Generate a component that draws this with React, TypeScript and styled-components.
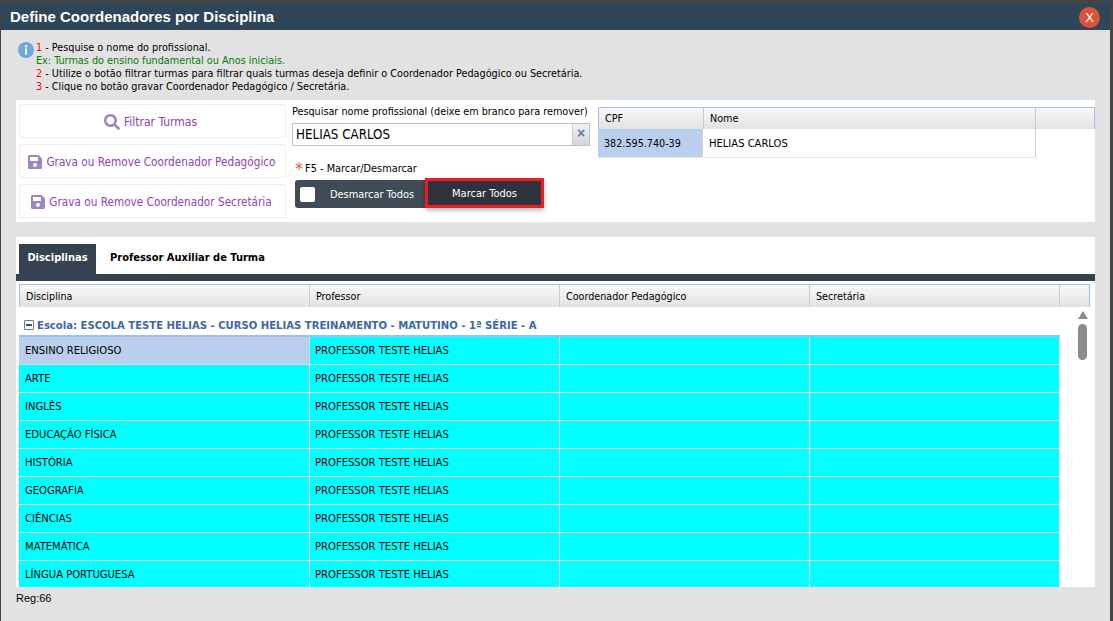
import React from "react";
import styled, { createGlobalStyle } from "styled-components";
import { FaSearch, FaSave } from "react-icons/fa";

const FONT = `"DejaVu Sans Condensed", "DejaVu Sans", sans-serif`;

const Global = createGlobalStyle`
  html, body { margin: 0; padding: 0; background: #444; }
  body { font-family: ${FONT}; font-size: 10.7px; color: #000; overflow: hidden; }
  * { box-sizing: border-box; }
`;

const Page = styled.div`
  width: 1113px;
  height: 621px;
  padding: 3px 3px 0 1px;
  background: #454545;
`;
const Dialog = styled.div`
  height: 618px;
  background: #e2e2e2;
  display: flex;
  flex-direction: column;
`;
const TitleBar = styled.header`
  height: 27px;
  flex: none;
  background: #2f4558;
  display: flex;
  align-items: center;
  justify-content: space-between;
  padding: 0 10px 0 9px;
`;
const Title = styled.h1`
  margin: 0;
  font: bold 15px "Liberation Sans", Arial, sans-serif;
  color: #fff;
`;
const CloseButton = styled.button`
  width: 21px;
  height: 21px;
  border: 0;
  padding: 0;
  border-radius: 50%;
  background: #d9533c;
  color: #fff;
  font: 13px "Liberation Sans", Arial, sans-serif;
  margin-top: 1px;
`;
const Help = styled.div`
  height: 70px;
  flex: none;
  display: flex;
  padding: 11px 0 0 16px;
  gap: 1px;
`;
const HelpText = styled.div`
  line-height: 13px;
  font-size: 10.77px;
`;
const Line = styled.div<{ $tone?: string }>`
  color: ${(p) => p.$tone ?? "#000"};
  white-space: nowrap;
`;
const Num = styled.span`
  color: #f00;
`;
const TopPanel = styled.section`
  margin-left: 15px;
  width: 1079px;
  height: 122px;
  flex: none;
  background: #fff;
  display: flex;
  padding: 4px 0 0 3px;
`;
const ActionColumn = styled.div`
  width: 267px;
  flex: none;
  display: flex;
  flex-direction: column;
  gap: 6px;
`;
const ActionButton = styled.button<{ $size?: number; $gap?: number; $shift?: number }>`
  height: 34px;
  background: #fff;
  border: 1px solid #eeeeee;
  border-radius: 2px;
  color: #8e44ad;
  font: ${(p) => p.$size ?? 11.7}px ${FONT};
  display: flex;
  align-items: center;
  justify-content: center;
  gap: ${(p) => p.$gap ?? 3}px;
  padding: 2px ${(p) => p.$shift ?? 2}px 0 0;
  svg { color: #9b86c4; font-size: 16px; }
`;
const SearchColumn = styled.div`
  width: 298px;
  margin-left: 6px;
  flex: none;
`;
const FieldLabel = styled.label`
  display: block;
  height: 19px;
  padding-top: 1px;
  line-height: 13px;
  white-space: nowrap;
  font-size: 10.75px;
`;
const InputWrap = styled.div`
  height: 23px;
  border: 1px solid #b9c2cc;
  display: flex;
`;
const Input = styled.div`
  flex: 1;
  padding: 0 0 0 3px;
  font: 13.25px/21px ${FONT};
`;
const ClearBtn = styled.div`
  width: 17px;
  background: linear-gradient(#f2f2f2, #d6d6d6);
  border-left: 1px solid #c8c8c8;
  color: #4f81b5;
  font: bold 14px/18px "Liberation Sans", Arial, sans-serif;
  text-align: center;
`;
const Hint = styled.div`
  margin-top: 15px;
  margin-left: 3px;
  height: 13px;
  line-height: 13px;
  display: flex;
  white-space: nowrap;
  font-size: 10.87px;
  padding-top: 1px;
`;
const Star = styled.span`
  color: #d9603c;
  font-size: 18px;
  line-height: 14px;
  margin-right: 2px;
`;
const ToggleGroup = styled.div`
  margin: 4px 0 0 3px;
  display: flex;
  height: 30px;
  align-items: flex-end;
`;
const ToggleOff = styled.div`
  width: 132px;
  height: 28px;
  background: #414b56;
  border-radius: 3px 0 0 3px;
  color: #fff;
  display: flex;
  align-items: center;
  padding-left: 5px;
  font-size: 10.9px;
`;
const Box = styled.span`
  width: 15px;
  height: 15px;
  background: #fff;
  border-radius: 2px;
  margin-right: 15px;
`;
const ToggleOn = styled.div`
  width: 119px;
  height: 30px;
  margin-left: -2px;
  background: #2d333b;
  border: 3px solid #ed1c24;
  color: #fff;
  display: flex;
  align-items: center;
  justify-content: center;
  font-size: 11px;
  box-shadow: 0 2px 5px rgba(0, 0, 0, 0.3);
`;
const ProGrid = styled.div`
  width: 497px;
  margin: 3px 0 0 8px;
  flex: none;
`;
const HeadRow = styled.div<{ $h: number }>`
  display: flex;
  height: ${(p) => p.$h}px;
  border: solid #9dbfe8;
  border-width: 1px 1px 0 1px;
  background: linear-gradient(#f9f8f8, #e3e1e1);
`;
const HeadCell = styled.div<{ $w?: number }>`
  width: ${(p) => (p.$w ? `${p.$w}px` : "auto")};
  flex: ${(p) => (p.$w ? "none" : 1)};
  border-right: 1px solid #c9c9c9;
  padding-left: 6px;
  display: flex;
  align-items: center;
  &:last-child { border-right: 0; }
`;
const ProRow = styled.div`
  display: flex;
  height: 29px;
  width: 438px;
`;
const ProCell = styled.div<{ $w?: number; $sel?: boolean; $size?: number }>`
  width: ${(p) => (p.$w ? `${p.$w}px` : "auto")};
  flex: ${(p) => (p.$w ? "none" : 1)};
  background: ${(p) => (p.$sel ? "#b9cfed" : "#fff")};
  border-right: 1px solid #d0d0d0;
  border-bottom: 1px solid #e6e6e6;
  padding-left: 6px;
  font-size: ${(p) => p.$size ?? 10.7}px;
  display: flex;
  align-items: center;
`;
const TabsPanel = styled.section`
  margin: 15px 0 0 15px;
  width: 1079px;
  height: 350px;
  flex: none;
  background: #fff;
  display: flex;
  flex-direction: column;
`;
const Tabs = styled.div`
  height: 37px;
  flex: none;
  padding: 7px 0 0 3px;
  display: flex;
`;
const Tab = styled.div<{ $on?: boolean }>`
  width: ${(p) => (p.$on ? "77px" : "auto")};
  padding: ${(p) => (p.$on ? "1px 0 0" : "1px 0 0 14px")};
  background: ${(p) => (p.$on ? "#36424f" : "transparent")};
  color: ${(p) => (p.$on ? "#fff" : "#000")};
  font: bold 11px/26px ${FONT};
  text-align: center;
`;
const TabBar = styled.div`
  height: 7px;
  flex: none;
  background: #36424f;
`;
const GridWrap = styled.div`
  width: 1071px;
  margin: 3px 0 0 3px;
  flex: 1;
  display: flex;
  flex-direction: column;
  min-height: 0;
`;
const BodyWrap = styled.div`
  flex: 1;
  display: flex;
  min-height: 0;
  overflow: hidden;
`;
const Rows = styled.div`
  width: 1041px;
  flex: none;
`;
const GroupRow = styled.div`
  height: 30px;
  padding: 8px 0 0 5px;
  display: flex;
  align-items: center;
  gap: 3px;
  color: #3c67a6;
  font: bold 11.2px ${FONT};
  white-space: nowrap;
  border-bottom: 2px solid #9dbfe8;
`;
const Minus = styled.span`
  width: 10px;
  height: 10px;
  border: 1px solid #6a7c93;
  border-radius: 1px;
  position: relative;
  &::after {
    content: "";
    position: absolute;
    left: 1px;
    right: 1px;
    top: 3px;
    height: 2px;
    background: #44556b;
  }
`;
const Row = styled.div`
  height: 28px;
  display: flex;
  background: #00ffff;
  border-bottom: 1px solid #dcdcdc;
`;
const Cell = styled.div<{ $w: number; $sel?: boolean; $pad?: number }>`
  width: ${(p) => p.$w}px;
  flex: none;
  height: 100%;
  padding-left: ${(p) => p.$pad ?? 6}px;
  display: flex;
  align-items: center;
  white-space: nowrap;
  font-size: 11.15px;
  background: ${(p) => (p.$sel ? "#b9cfed" : "transparent")};
  border-right: 1px solid #dcdcdc;
`;
const ScrollTrack = styled.div`
  flex: 1;
  position: relative;
  background: #fff;
  display: flex;
  flex-direction: column;
  align-items: center;
  padding: 4px 0 0 15px;
`;
const Thumb = styled.div`
  width: 9px;
  height: 36px;
  margin-top: 5px;
  border-radius: 5px;
  background: #8c8c8c;
`;
const Footer = styled.div`
  margin: 4px 0 0 15px;
  font: 11px/14px "Liberation Sans", Arial, sans-serif;
`;

const items = ["ENSINO RELIGIOSO", "ARTE", "INGLÊS", "EDUCAÇÃO FÍSICA", "HISTÓRIA", "GEOGRAFIA", "CIÊNCIAS", "MATEMÁTICA", "LÍNGUA PORTUGUESA"];

export default function App() {
  return (
    <Page>
      <Global />
      <Dialog>
        <TitleBar>
          <Title>Define Coordenadores por Disciplina</Title>
          <CloseButton>X</CloseButton>
        </TitleBar>
        <Help>
          <svg width="18" height="18" viewBox="0 0 18 18">
            <circle cx="9" cy="9" r="8" fill="#6ea8dc" />
            <circle cx="9" cy="5.2" r="1.2" fill="#fff" />
            <rect x="8" y="7.5" width="2" height="6" fill="#fff" />
          </svg>
          <HelpText>
            <Line><Num>1</Num> - Pesquise o nome do profissional.</Line>
            <Line $tone="#007f00">Ex: Turmas do ensino fundamental ou Anos iniciais.</Line>
            <Line><Num>2</Num> - Utilize o botão filtrar turmas para filtrar quais turmas deseja definir o Coordenador Pedagógico ou Secretária.</Line>
            <Line><Num>3</Num> - Clique no botão gravar Coordenador Pedagógico / Secretária.</Line>
          </HelpText>
        </Help>
        <TopPanel>
          <ActionColumn>
            <ActionButton $size={12} $gap={4} $shift={4}><FaSearch />Filtrar Turmas</ActionButton>
            <ActionButton><FaSave />Grava ou Remove Coordenador Pedagógico</ActionButton>
            <ActionButton $shift={3}><FaSave />Grava ou Remove Coordenador Secretária</ActionButton>
          </ActionColumn>
          <SearchColumn>
            <FieldLabel>Pesquisar nome profissional (deixe em branco para remover)</FieldLabel>
            <InputWrap>
              <Input>HELIAS CARLOS</Input>
              <ClearBtn>×</ClearBtn>
            </InputWrap>
            <Hint><Star>*</Star>F5 - Marcar/Desmarcar</Hint>
            <ToggleGroup>
              <ToggleOff><Box />Desmarcar Todos</ToggleOff>
              <ToggleOn>Marcar Todos</ToggleOn>
            </ToggleGroup>
          </SearchColumn>
          <ProGrid>
            <HeadRow $h={22}>
              <HeadCell $w={105}>CPF</HeadCell>
              <HeadCell $w={332}>Nome</HeadCell>
              <HeadCell />
            </HeadRow>
            <ProRow>
              <ProCell $w={105} $sel>382.595.740-39</ProCell>
              <ProCell $size={11.1}>HELIAS CARLOS</ProCell>
            </ProRow>
          </ProGrid>
        </TopPanel>
        <TabsPanel>
          <Tabs>
            <Tab $on>Disciplinas</Tab>
            <Tab>Professor Auxiliar de Turma</Tab>
          </Tabs>
          <TabBar />
          <GridWrap>
            <HeadRow $h={23}>
              <HeadCell $w={290}>Disciplina</HeadCell>
              <HeadCell $w={250}>Professor</HeadCell>
              <HeadCell $w={250}>Coordenador Pedagógico</HeadCell>
              <HeadCell $w={250}>Secretária</HeadCell>
              <HeadCell />
            </HeadRow>
            <BodyWrap>
              <Rows>
                <GroupRow><Minus />Escola: ESCOLA TESTE HELIAS - CURSO HELIAS TREINAMENTO - MATUTINO - 1ª SÉRIE - A</GroupRow>
                {items.map((it, i) => (
                  <Row key={it}>
                    <Cell $w={291} $sel={i === 0}>{it}</Cell>
                    <Cell $w={250} $pad={5}>PROFESSOR TESTE HELIAS</Cell>
                    <Cell $w={250} />
                    <Cell $w={250} />
                  </Row>
                ))}
              </Rows>
              <ScrollTrack>
                <svg width="10" height="8" viewBox="0 0 10 8"><path d="M5 0L10 8H0Z" fill="#8c8c8c" /></svg>
                <Thumb />
              </ScrollTrack>
            </BodyWrap>
          </GridWrap>
        </TabsPanel>
        <Footer>Reg:66</Footer>
      </Dialog>
    </Page>
  );
}
